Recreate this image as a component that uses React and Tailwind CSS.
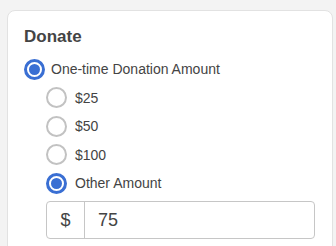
import React, { useState } from "react";

const amounts = ["$25", "$50", "$100", "Other Amount"];

function Radio({ checked }) {
    return (
        <span
            className={
                "flex h-[21px] w-[21px] shrink-0 items-center justify-center rounded-full bg-white " +
                (checked ? "border-[3px] border-[#3a6fd3]" : "border-2 border-[#c2c2c2]")
            }
        >
            {checked && <span className="h-[11px] w-[11px] rounded-full bg-[#3a6fd3]" />}
        </span>
    );
}

export default function App() {
    const [choice, setChoice] = useState("Other Amount");
    const [amount, setAmount] = useState("75");

    return (
        <div className="min-h-[246px] overflow-hidden bg-[#f3f3f3] pl-[7px] pt-[10px] font-['Liberation_Sans',Arial,sans-serif] text-[#444]">
            <div className="w-[326px] rounded-lg border border-[#e2e2e2] bg-white px-4 pb-6 pt-4">
                <h2 className="text-[17px] font-bold leading-5">Donate</h2>

                <div className="mt-2">
                    {/* One-time donation */}
                    <label className="flex h-[28.5px] items-center gap-[6px] text-sm">
                        <Radio checked />
                        <span>One-time Donation Amount</span>
                    </label>

                    <div className="pl-[22px]">
                        {amounts.map((a) => (
                            <label
                                key={a}
                                onClick={() => setChoice(a)}
                                className="flex h-[28.5px] cursor-pointer items-center gap-[8px] text-sm"
                            >
                                <Radio checked={choice === a} />
                                <span>{a}</span>
                            </label>
                        ))}

                        {/* Champ montant */}
                        <div className="mt-[3px] flex h-[38px] w-[269px] rounded border border-[#c6c6c6]">
                            <span className="flex w-[38px] items-center justify-center border-r border-[#c6c6c6] text-lg">
                                $
                            </span>
                            <input
                                value={amount}
                                onChange={(e) => setAmount(e.target.value)}
                                className="min-w-0 flex-1 bg-transparent pl-[13px] text-lg text-[#444] outline-none"
                            />
                        </div>
                    </div>
                </div>
            </div>
        </div>
    );
}
